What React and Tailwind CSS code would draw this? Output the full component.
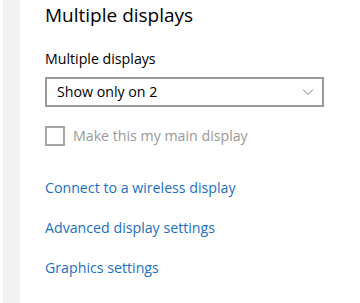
export default function App() {
  return (
    <div className="flex w-[360px] h-[303px] bg-white overflow-hidden" style={{ fontFamily: '"Open Sans", "Noto Sans", sans-serif' }}>
      <div className="w-[3px] bg-white" />
      <div className="w-[17px] bg-[#f2f2f2]" />
      <div className="flex flex-col pl-[25px]">
        <div className="mt-[2px] h-[27px] text-[19px] leading-[27px] text-black">Multiple displays</div>
        <div className="mt-[20px] h-[20px] text-[14.2px] leading-[20px] text-black">Multiple displays</div>
        <div className="mt-[8px] flex items-center justify-between w-[279px] h-[30px] border-2 border-[#999999] pl-[10px] pr-[7px]">
          <span className="text-[14.2px] leading-[20px] text-black">Show only on 2</span>
          <svg width="12" height="8" viewBox="0 0 12 8" className="mr-[1px]">
            <path d="M1 1.5 L6 6.5 L11 1.5" fill="none" stroke="#7a7a7a" strokeWidth="1" />
          </svg>
        </div>
        <div className="mt-[19px] flex items-center h-[20px]">
          <div className="w-[20px] h-[20px] border-2 border-[#a6a6a6]" />
          <span className="ml-[8px] text-[14.2px] leading-[20px] text-[#999999]">Make this my main display</span>
        </div>
        <div className="mt-[32px] flex flex-col gap-[20px]">
          <a className="h-[20px] text-[14.2px] leading-[20px] text-[#1a6fc2]">Connect to a wireless display</a>
          <a className="h-[20px] text-[14.2px] leading-[20px] text-[#1a6fc2]">Advanced display settings</a>
          <a className="h-[20px] text-[14.2px] leading-[20px] text-[#1a6fc2]">Graphics settings</a>
        </div>
      </div>
    </div>
  );
}
